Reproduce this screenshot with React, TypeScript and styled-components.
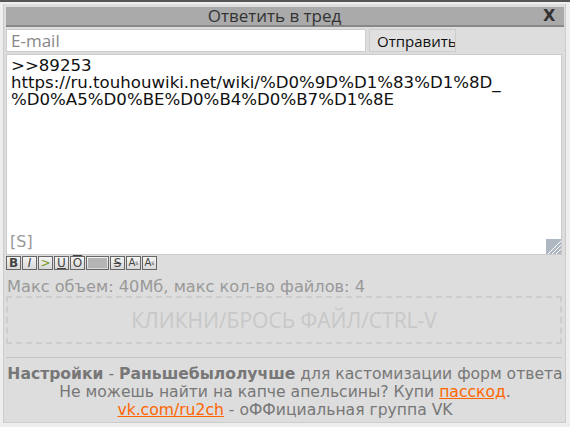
import React from 'react';
import styled, { createGlobalStyle } from 'styled-components';

const GlobalStyle = createGlobalStyle`
    html, body {
        margin: 0;
        padding: 0;
        background: #eeeeee;
    }
    body {
        border-top: 2px solid #555;
        font-family: 'DejaVu Sans', Verdana, sans-serif;
    }
`;

const Form = styled.div`
    margin: 2px 4px 0 3px;
    padding: 3px 1px 3px 2px;
    background: #dddddd;
    border: 1px solid #cccccc;
    border-top: none;
    height: 419px;
    box-sizing: border-box;
    display: flex;
    flex-direction: column;
`;

const Header = styled.div`
    display: flex;
    height: 18px;
    background: #aaaaaa;
    border-bottom: 2px solid #888888;
    color: #333;
    font-family: 'Open Sans', 'Liberation Sans', sans-serif;
    font-size: 17px;
    line-height: 18px;
`;

const Title = styled.span`
    flex: 1;
    text-align: center;
`;

const Close = styled.span`
    width: 21px;
    font-family: 'DejaVu Sans', sans-serif;
    font-weight: 700;
    font-size: 16px;
    color: #333;
`;

const Row = styled.div`
    display: flex;
    gap: 3px;
    margin-top: 2px;
    height: 23px;
`;

const Email = styled.input`
    width: 360px;
    box-sizing: border-box;
    border: 1px solid #cccccc;
    background: #fff;
    padding: 0 4px;
    font-family: 'Open Sans', 'Liberation Sans', sans-serif;
    font-size: 17px;
    color: #333;
    outline: none;
    &::placeholder {
        color: #888;
    }
`;

const Submit = styled.button`
    width: 87px;
    box-sizing: border-box;
    border: 1px solid #cccccc;
    background: #e0e0e0;
    padding: 0 0 0 7px;
    text-align: left;
    overflow: hidden;
    white-space: nowrap;
    font-family: 'Open Sans', 'Liberation Sans', sans-serif;
    font-size: 15px;
    color: #111;
`;

const TextBox = styled.div`
    position: relative;
    margin: 2px 2px 0 0;
    height: 201px;
    box-sizing: border-box;
    background: #fff;
    border: 1px solid #cccccc;
    padding: 2px 4px;
`;

const Message = styled.div`
    font-size: 16.6px;
    line-height: 17px;
    color: #111;
    word-break: break-all;
`;

const Sage = styled.span`
    position: absolute;
    left: 3px;
    bottom: 3px;
    font-size: 16px;
    color: #999;
`;

// resize handle with white hatching in its corner
const Grip = styled.div`
    position: absolute;
    right: 0;
    bottom: 0;
    width: 15px;
    height: 15px;
    background: linear-gradient(
        135deg,
        #aeb7c2 0 55%,
        #fff 55% 60%,
        #aeb7c2 60% 68%,
        #fff 68% 73%,
        #aeb7c2 73% 81%,
        #fff 81% 86%,
        #aeb7c2 86% 100%
    );
`;

const Toolbar = styled.div`
    display: flex;
    gap: 1px;
    margin-top: 1px;
`;

const MarkBtn = styled.span<{ $wide?: boolean; $color?: string }>`
    width: ${p => (p.$wide ? 23 : 15)}px;
    height: 14px;
    box-sizing: border-box;
    border: 1px solid #666;
    background: linear-gradient(#f4f4f4, #d8d8d8);
    color: ${p => p.$color || '#444'};
    font-family: 'DejaVu Sans', sans-serif;
    font-size: 12px;
    line-height: 12px;
    display: flex;
    align-items: center;
    justify-content: center;
`;

const Swatch = styled.span`
    width: 19px;
    height: 10px;
    background: #b4b4b4;
`;

const Limits = styled.div`
    margin-top: 8px;
    font-size: 16.2px;
    line-height: 18px;
    color: #999;
    padding-left: 1px;
`;

const Drop = styled.div`
    margin: 0 2px 0 0;
    height: 48px;
    box-sizing: border-box;
    border: 2px dashed #cdcdcd;
    display: flex;
    align-items: center;
    justify-content: center;
    font-family: 'Open Sans', 'Liberation Sans', sans-serif;
    font-size: 21px;
    color: #c8c8c8;
`;

const Rule = styled.hr`
    margin: 13px 2px 0 0;
    border: none;
    border-top: 1px solid #c4c4c4;
`;

const Footer = styled.div`
    margin-top: 7px;
    text-align: center;
    font-size: 15.6px;
    line-height: 18px;
    color: #777;
    white-space: nowrap;
    b {
        font-weight: 700;
    }
    a {
        color: #ff6600;
        text-decoration: underline;
    }
`;

const App: React.FC = () => {
    return (
        <>
            <GlobalStyle />
            <Form>
                <Header>
                    <Title>Ответить в тред</Title>
                    <Close>X</Close>
                </Header>
                <Row>
                    <Email placeholder="E-mail" />
                    <Submit>Отправить</Submit>
                </Row>
                <TextBox>
                    <Message>
                        &gt;&gt;89253
                        <br />
                        https://ru.touhouwiki.net/wiki/%D0%9D%D1%83%D1%8D_
                        <br />
                        %D0%A5%D0%BE%D0%B4%D0%B7%D1%8E
                    </Message>
                    <Sage>[S]</Sage>
                    <Grip />
                </TextBox>
                <Toolbar>
                    <MarkBtn style={{ fontWeight: 700 }}>B</MarkBtn>
                    <MarkBtn style={{ fontStyle: 'italic' }}>I</MarkBtn>
                    <MarkBtn $color="#789922">&gt;</MarkBtn>
                    <MarkBtn style={{ textDecoration: 'underline' }}>U</MarkBtn>
                    <MarkBtn style={{ textDecoration: 'overline' }}>O</MarkBtn>
                    <MarkBtn $wide><Swatch /></MarkBtn>
                    <MarkBtn style={{ textDecoration: 'line-through' }}>S</MarkBtn>
                    <MarkBtn style={{ fontSize: 10 }}>A<sup style={{ fontSize: 6 }}>s</sup></MarkBtn>
                    <MarkBtn style={{ fontSize: 10 }}>A<sub style={{ fontSize: 6 }}>s</sub></MarkBtn>
                </Toolbar>
                <Limits>Макс объем: 40Мб, макс кол-во файлов: 4</Limits>
                <Drop>КЛИКНИ/БРОСЬ ФАЙЛ/CTRL-V</Drop>
                <Rule />
                <Footer>
                    <b>Настройки</b> - <b>Раньшебылолучше</b> для кастомизации форм ответа
                    <br />
                    Не можешь найти на капче апельсины? Купи <a>пасскод</a>.
                    <br />
                    <a>vk.com/ru2ch</a> - оФФициальная группа VK
                </Footer>
            </Form>
        </>
    );
};

export default App;
